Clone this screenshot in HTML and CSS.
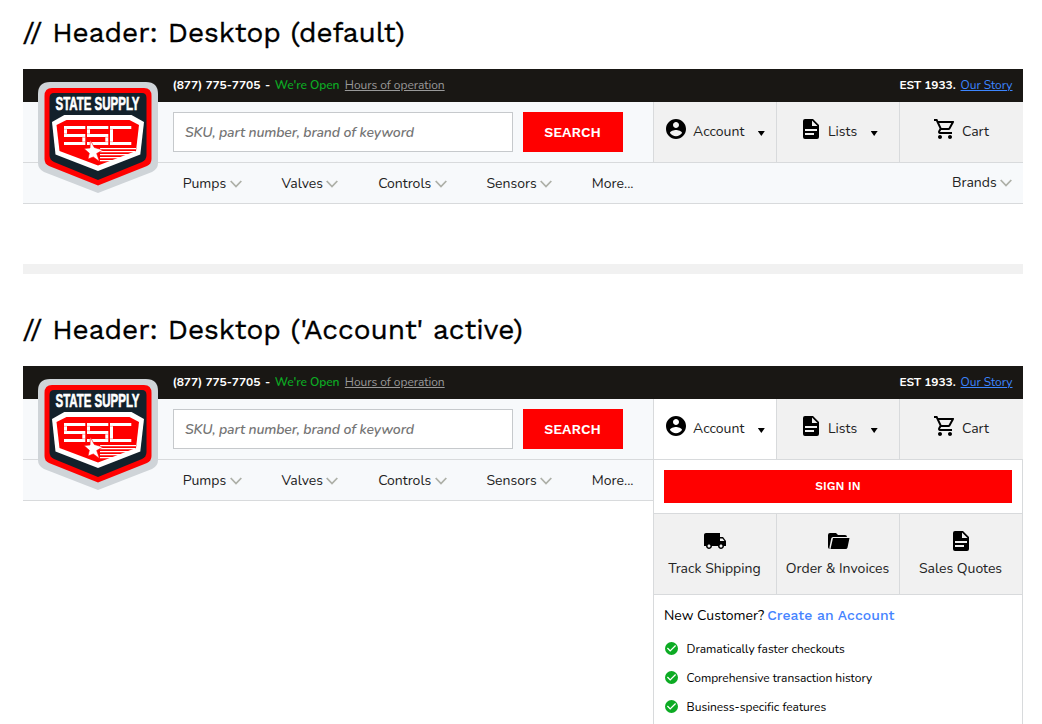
FILE: index.html
```
<!DOCTYPE html>
<html lang="en">
<head>
<meta charset="utf-8">
<title>State Supply headers</title>
<link rel="stylesheet" href="styles.css">
</head>
<body>
<svg class="sprite" aria-hidden="true">
  <symbol id="logo" viewBox="0 0 120 111">
    <path fill="#cfd4d8" d="M12 0H108Q120 0 120 12V81Q120 87 114 90L60 111L6 90Q0 87 0 81V12Q0 0 12 0Z"/>
    <path fill="#f00" d="M14 6H106Q113.500 6 113.500 14V77Q113.500 82 109 84L60 103.500L11 84Q6.500 82 6.500 77V14Q6.500 6 14 6Z"/>
    <path fill="#13212b" d="M16 11H104Q108.500 11 108.500 16V73Q108.500 78 104 80L60 98L16 80Q11.500 78 11.500 73V16Q11.500 11 16 11Z"/>
    <path fill="#fff" d="M26.300 33H93.500L106 40L102.300 72.500L60 89L17.500 72.500L14 40Z"/>
    <path fill="#f00" d="M28.500 38H91.500L101 43L98 69L60 83.500L21.500 69L18.500 43Z"/>
    <path fill="#fff" d="M26 44H47.300V47H29V52H47.300V63H26V60H44.300V55H26ZM49 44H70.300V47H52V52H70.300V63H49V60H67.300V55H49ZM72 44H93.300V47H75V60H93.300V63H72Z"/>
    <path fill="none" stroke="#f00" stroke-opacity=".45" stroke-width=".7" d="M26 47.300H29M26 51.700H29M44 55.300H47.300M44 59.700H47.300M49 47.300H52M49 51.700H52M67 55.300H70.300M67 59.700H70.300M72 47.300H75M72 59.700H75"/>
    <path fill="#fff" d="M62 66H98V67.300H62ZM62 69H97V70.300H62ZM62 72H92V73.300H62ZM62 75H86V76.300H62ZM62 78H77V79.300H62Z"/>
    <path fill="#fff" stroke="#f00" stroke-width=".6" d="M52.300 58L56.300 65.500L65 68L58.700 71.500L61.500 79.500L55.300 75L50 77L51.300 71.300L46 66.500L52 66Z"/>
  </symbol>
  <symbol id="user" viewBox="2 2 20 20"><path d="M12 2C6.480 2 2 6.480 2 12s4.480 10 10 10 10-4.480 10-10S17.520 2 12 2zm0 3c1.660 0 3 1.340 3 3s-1.340 3-3 3-3-1.340-3-3 1.340-3 3-3zm0 14.200c-2.500 0-4.710-1.280-6-3.220.030-1.990 4-3.080 6-3.080 1.990 0 5.970 1.090 6 3.080-1.290 1.940-3.500 3.220-6 3.220z"/></symbol>
  <symbol id="doc" viewBox="4 2 16 20"><path fill-rule="evenodd" d="M6 2h8l6 6v12a2 2 0 0 1-2 2H6a2 2 0 0 1-2-2V4a2 2 0 0 1 2-2zM13 3.500V9h5.500zM6 12v2h12V12zM6 16v2h9V16z"/></symbol>
  <symbol id="cart" viewBox="1 2 21 20"><path d="M15.550 13c.750 0 1.410-.410 1.750-1.030l3.580-6.490A.996.996 0 0 0 20.010 4H5.210l-.940-2H1v2h2l3.600 7.590-1.350 2.440C4.520 15.370 5.480 17 7 17h12v-2H7l1.100-2h7.450zM6.160 6h12.150l-2.760 5H8.530L6.160 6zM7 18c-1.100 0-1.990.9-1.990 2S5.900 22 7 22s2-.9 2-2-.9-2-2-2zm10 0c-1.100 0-1.990.9-1.990 2s.890 2 1.990 2 2-.9 2-2-.9-2-2-2z"/></symbol>
  <symbol id="truck" viewBox="1 4 22 16"><path d="M20 8h-3V4H3c-1.100 0-2 .9-2 2v11h2c0 1.660 1.340 3 3 3s3-1.340 3-3h6c0 1.660 1.340 3 3 3s3-1.340 3-3h2v-5l-3-4zM6 18.500c-.830 0-1.500-.670-1.500-1.500s.670-1.500 1.500-1.500 1.500.670 1.500 1.500-.670 1.500-1.500 1.500zm13.500-9l1.960 2.500H17V9.500h2.500zm-1.500 9c-.830 0-1.500-.670-1.500-1.500s.670-1.500 1.500-1.500 1.500.670 1.500 1.500-.670 1.500-1.500 1.500z"/></symbol>
  <symbol id="folder" viewBox="0 0 22 16"><path d="M2 0H8L10 2H17Q19 2 19 4H5Q3.500 4 3.200 5.500L1.500 14V16Q0 15.500 0 14V2Q0 0 2 0ZM5 5H21.500L19.500 14.500Q19.200 16 17.500 16H2.500Z"/></symbol>
  <symbol id="check" viewBox="2 2 20 20"><path fill="#0cab23" d="M12 2a10 10 0 1 0 0 20 10 10 0 0 0 0-20zm-2 15-5-5 1.410-1.410L10 14.170l7.590-7.590L19 8l-9 9z"/></symbol>
  <symbol id="chevron" viewBox="0 0 12 8"><path fill="none" stroke="#aeb0a8" stroke-width="1.800" d="M.7 1L6 6.500L11.300 1"/></symbol>
</svg>

<h1 class="title"><span>//</span> <span>Header:</span> <span>Desktop</span> <span>(default)</span></h1>
<header class="header">
  <svg class="logo" viewBox="0 0 120 111"><use href="#logo"/><text class="logo-text" x="17.500" y="28" textLength="84" lengthAdjust="spacingAndGlyphs">STATE SUPPLY</text></svg>
  <div class="topbar">
    <b class="phone">(877) 775-7705</b><b class="dash">-</b><span class="open">We're Open</span><a class="hours">Hours of operation</a>
    <b class="est">EST 1933.</b><a class="story">Our Story</a>
  </div>
  <div class="main">
    <div class="search"><div class="field">SKU, part number, brand of keyword</div><div class="search-btn"><span>SEARCH</span></div></div>
    <div class="tab tab-account"><svg class="i-user"><use href="#user"/></svg><span>Account</span><i class="caret"></i></div>
    <div class="tab tab-lists"><svg class="i-doc"><use href="#doc"/></svg><span>Lists</span><i class="caret"></i></div>
    <div class="tab tab-cart"><svg class="i-cart"><use href="#cart"/></svg><span>Cart</span></div>
  </div>
  <nav class="nav">
    <a><span>Pumps</span><svg><use href="#chevron"/></svg></a>
    <a><span>Valves</span><svg><use href="#chevron"/></svg></a>
    <a><span>Controls</span><svg><use href="#chevron"/></svg></a>
    <a><span>Sensors</span><svg><use href="#chevron"/></svg></a>
    <a><span>More...</span></a>
    <a class="brands"><span>Brands</span><svg><use href="#chevron"/></svg></a>
  </nav>
</header>
<hr class="divider">
<h1 class="title title-2"><span>//</span> <span>Header:</span> <span>Desktop</span> <span>('Account'</span> <span>active)</span></h1>
<header class="header">
  <svg class="logo" viewBox="0 0 120 111"><use href="#logo"/><text class="logo-text" x="17.500" y="28" textLength="84" lengthAdjust="spacingAndGlyphs">STATE SUPPLY</text></svg>
  <div class="topbar">
    <b class="phone">(877) 775-7705</b><b class="dash">-</b><span class="open">We're Open</span><a class="hours">Hours of operation</a>
    <b class="est">EST 1933.</b><a class="story">Our Story</a>
  </div>
  <div class="main">
    <div class="search"><div class="field">SKU, part number, brand of keyword</div><div class="search-btn"><span>SEARCH</span></div></div>
    <div class="tab tab-account active"><svg class="i-user"><use href="#user"/></svg><span>Account</span><i class="caret"></i></div>
    <div class="tab tab-lists"><svg class="i-doc"><use href="#doc"/></svg><span>Lists</span><i class="caret"></i></div>
    <div class="tab tab-cart"><svg class="i-cart"><use href="#cart"/></svg><span>Cart</span></div>
  </div>
  <nav class="nav">
    <a><span>Pumps</span><svg><use href="#chevron"/></svg></a>
    <a><span>Valves</span><svg><use href="#chevron"/></svg></a>
    <a><span>Controls</span><svg><use href="#chevron"/></svg></a>
    <a><span>Sensors</span><svg><use href="#chevron"/></svg></a>
    <a><span>More...</span></a>
  </nav>
  <section class="menu">
    <div class="signin-row"><div class="signin"><span>SIGN IN</span></div></div>
    <div class="tiles">
      <div class="tile"><svg class="i-truck"><use href="#truck"/></svg><span>Track Shipping</span></div>
      <div class="tile"><svg class="i-folder"><use href="#folder"/></svg><span>Order &amp; Invoices</span></div>
      <div class="tile"><svg class="i-doc"><use href="#doc"/></svg><span>Sales Quotes</span></div>
    </div>
    <div class="join">
      <p class="new"><span>New Customer?</span><a class="create">Create an Account</a></p>
      <ul>
        <li><svg><use href="#check"/></svg><span>Dramatically faster checkouts</span></li>
        <li><svg><use href="#check"/></svg><span>Comprehensive transaction history</span></li>
        <li><svg><use href="#check"/></svg><span>Business-specific features</span></li>
      </ul>
    </div>
  </section>
</header>
</body>
</html>
```
FILE: styles.css
```
* { box-sizing: border-box; }
html { overflow: hidden; }
body { margin: 0; padding: 0 19px 0 23px; height: 724px; overflow: hidden; background: #fff; color: #222; font-family: Nunito, "Open Sans", sans-serif; font-size: 14px; line-height: 19px; }
svg { display: block; flex: none; }
span, b, a { white-space: nowrap; }
.sprite { position: absolute; width: 0; height: 0; }
.logo-text { font: bold 17.5px "Liberation Sans Narrow", "Liberation Sans", sans-serif; fill: #fff; stroke: #fff; stroke-width: .6px; }

.title { display: flex; gap: 9.8px; margin: 0 0 0 -.5px; height: 69px; padding-top: 16px; font: 400 28px/34px "Work Sans", Inter, sans-serif; color: #000; -webkit-text-stroke: .35px #000; }
.title-2 { height: 92px; padding-top: 39px; }

.header { position: relative; width: 1000px; }
.logo { position: absolute; left: 15px; top: 13px; width: 120px; height: 111px; z-index: 1; overflow: visible; }

.topbar { display: flex; align-items: center; height: 33px; padding: 1px 10.5px 1px 149.5px; background: #191714; color: #fff; font-size: 12px; letter-spacing: -.04px; }
.topbar b { font-weight: 700; letter-spacing: -.09px; }
.topbar .dash { margin: 0 4.7px; }
.open { color: #0cab23; font-weight: 600; letter-spacing: -.1px; }
.hours { margin-left: 5.5px; color: #999; text-decoration: underline; }
.est { margin-left: auto; }
.story { margin-left: 5px; color: #3d86ff; text-decoration: underline; }

.main { display: flex; height: 61px; background: #f7f9fb; border-bottom: 1px solid #d8dadc; }
.search { display: flex; gap: 10px; width: 630px; padding: 10px 0 0 150px; }
.field { display: flex; align-items: center; width: 340px; height: 40px; padding-left: 11px; background: #fff; border: 1px solid #c6c9cc; color: #757575; font-style: italic; font-weight: 600; letter-spacing: -.13px; }
.search-btn { display: grid; place-items: center; width: 100px; height: 40px; padding-right: 1px; background: #f00; color: #fff; font: 600 14px "Work Sans", Inter, sans-serif; }
.tab { display: flex; align-items: center; width: 123px; height: 60px; background: #f1f1f1; border-left: 1px solid #d8dadc; padding-bottom: 1px; }
.tab:last-child { width: 124px; }
.tab.active { background: #fff; }
.tab-account { padding-left: 12px; }
.tab-lists { padding-left: 26px; }
.tab-cart { padding-left: 34px; }
.tab svg { margin-bottom: 5px; }
.i-user { width: 20px; height: 20px; margin-right: 7px; }
.i-doc { width: 16px; height: 20px; }
.tab .i-doc { margin-right: 9px; }
.i-cart { width: 21px; height: 20px; margin-right: 7px; }
.caret { width: 7px; height: 5px; margin: 4px 0 0 13.5px; background: #000; clip-path: polygon(0 0, 100% 0, 50% 100%); }

.nav { display: flex; align-items: center; gap: 39.9px; height: 41px; padding: 0 11px 0 159.7px; background: #f7f9fb; border-bottom: 1px solid #d8dadc; }
.nav a { display: flex; align-items: center; gap: 3.3px; }
.nav svg { width: 12px; height: 8px; margin-top: 1px; }
.nav .brands { margin-left: auto; padding-bottom: 2px; }
.divider { height: 10px; margin: 60px 0 0; border: 0; background: #f1f1f1; }

.menu { position: absolute; left: 630px; top: 93px; width: 370px; height: 265px; background: #fff; border: 1px solid #d8dadc; border-bottom: 0; }
.signin-row { height: 54px; padding: 10px; border-bottom: 1px solid #d8dadc; }
.signin { display: grid; place-items: center; height: 33px; padding-bottom: 1px; background: #f00; color: #fff; font: 600 12px "Work Sans", Inter, sans-serif; }
.tiles { display: flex; height: 81px; background: #f1f1f1; border-bottom: 1px solid #d8dadc; }
.tile { display: grid; grid-template-rows: 20px 20px; row-gap: 7px; align-content: start; place-items: center; width: 123px; padding: 17px 1px 0 0; border-left: 1px solid #d8dadc; }
.tile:first-child { width: 122px; border-left: 0; }
.i-truck { width: 22px; height: 16px; margin-left: 1px; }
.i-folder { width: 22px; height: 16px; margin-left: 2px; }
.tile .i-doc { margin-left: 1px; }
.join { padding: 10px 10px 0; color: #000; }
.new { display: flex; align-items: center; gap: 3px; height: 20px; margin: 0; }
.create { color: #4583ff; font-family: "Work Sans", Inter, sans-serif; font-weight: 500; letter-spacing: .04px; }
.join ul { list-style: none; margin: 9px 0 0; padding: 0; font-size: 12px; }
.join li { display: flex; align-items: center; gap: 8.6px; height: 29px; padding-left: 1px; letter-spacing: -.02px; }
.join li span { padding-top: 1px; }
.join li svg { width: 13px; height: 13px; }
```
